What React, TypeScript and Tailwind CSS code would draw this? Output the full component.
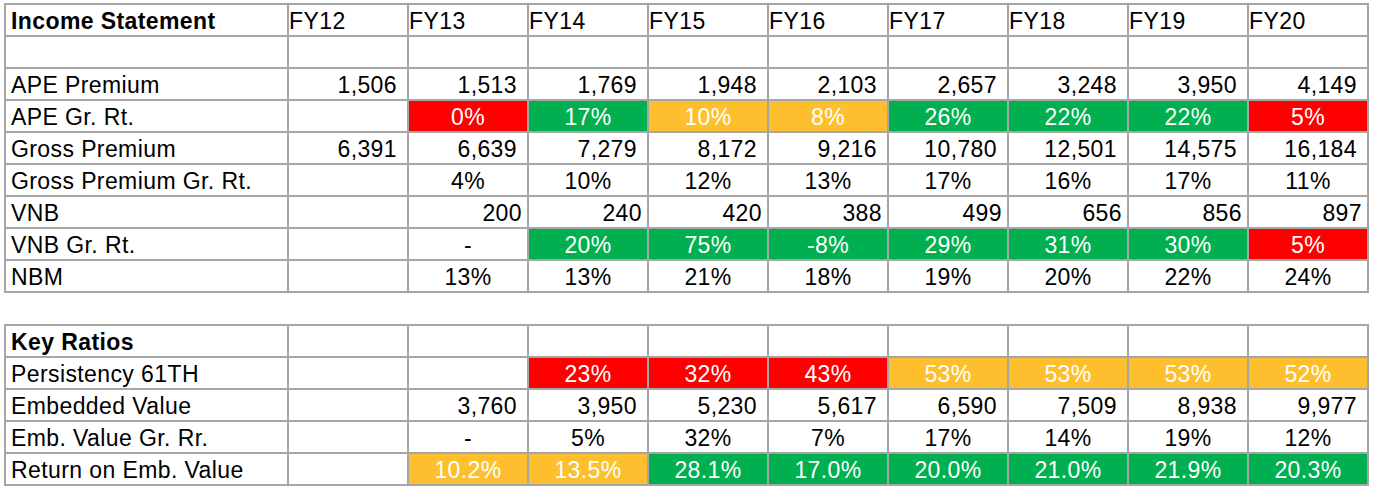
type Fill = 'r' | 'g' | 'a' | undefined;

interface Cell {
  v: string;
  align?: 'num' | 'plain' | 'mid' | 'left';
  fill?: Fill;
}

const fillClass: Record<string, string> = {
  r: 'bg-[#ff0000] text-white',
  g: 'bg-[#00b050] text-white',
  a: 'bg-[#fdbf2d] text-white',
};

const alignClass = {
  num: 'justify-end pr-[10px]',
  plain: 'justify-end pr-[5px]',
  mid: 'justify-center',
  left: 'justify-start pl-0',
};

// helpers for building rows
const nums = (...xs: string[]): Cell[] => xs.map((v) => ({ v, align: 'num' }));
const plain = (...xs: string[]): Cell[] => xs.map((v) => ({ v, align: 'plain' }));
const pct = (...xs: string[]): Cell[] => xs.map((v) => ({ v, align: 'mid' }));
const colored = (...xs: [string, Fill][]): Cell[] =>
  xs.map(([v, fill]) => ({ v, align: 'mid', fill }));
const blank = (n: number): Cell[] => Array.from({ length: n }, () => ({ v: '' }));

interface Row {
  label: string;
  bold?: boolean;
  cells: Cell[];
}

const years = ['FY12', 'FY13', 'FY14', 'FY15', 'FY16', 'FY17', 'FY18', 'FY19', 'FY20'];

const income: Row[] = [
  {
    label: 'Income Statement',
    bold: true,
    cells: years.map((v) => ({ v, align: 'left' })),
  },
  { label: '', cells: blank(9) },
  {
    label: 'APE Premium',
    cells: nums('1,506', '1,513', '1,769', '1,948', '2,103', '2,657', '3,248', '3,950', '4,149'),
  },
  {
    label: 'APE Gr. Rt.',
    cells: [
      ...blank(1),
      ...colored(
        ['0%', 'r'],
        ['17%', 'g'],
        ['10%', 'a'],
        ['8%', 'a'],
        ['26%', 'g'],
        ['22%', 'g'],
        ['22%', 'g'],
        ['5%', 'r'],
      ),
    ],
  },
  {
    label: 'Gross Premium',
    cells: nums('6,391', '6,639', '7,279', '8,172', '9,216', '10,780', '12,501', '14,575', '16,184'),
  },
  {
    label: 'Gross Premium Gr. Rt.',
    cells: [...blank(1), ...pct('4%', '10%', '12%', '13%', '17%', '16%', '17%', '11%')],
  },
  {
    label: 'VNB',
    cells: [...blank(1), ...plain('200', '240', '420', '388', '499', '656', '856', '897')],
  },
  {
    label: 'VNB Gr. Rt.',
    cells: [
      ...blank(1),
      ...pct('-'),
      ...colored(
        ['20%', 'g'],
        ['75%', 'g'],
        ['-8%', 'g'],
        ['29%', 'g'],
        ['31%', 'g'],
        ['30%', 'g'],
        ['5%', 'r'],
      ),
    ],
  },
  {
    label: 'NBM',
    cells: [...blank(1), ...pct('13%', '13%', '21%', '18%', '19%', '20%', '22%', '24%')],
  },
];

const ratios: Row[] = [
  { label: 'Key Ratios', bold: true, cells: blank(9) },
  {
    label: 'Persistency 61TH',
    cells: [
      ...blank(2),
      ...colored(
        ['23%', 'r'],
        ['32%', 'r'],
        ['43%', 'r'],
        ['53%', 'a'],
        ['53%', 'a'],
        ['53%', 'a'],
        ['52%', 'a'],
      ),
    ],
  },
  {
    label: 'Embedded Value',
    cells: [...blank(1), ...nums('3,760', '3,950', '5,230', '5,617', '6,590', '7,509', '8,938', '9,977')],
  },
  {
    label: 'Emb. Value Gr. Rr.',
    cells: [...blank(1), ...pct('-', '5%', '32%', '7%', '17%', '14%', '19%', '12%')],
  },
  {
    label: 'Return on Emb. Value',
    cells: [
      ...blank(1),
      ...colored(
        ['10.2%', 'a'],
        ['13.5%', 'a'],
        ['28.1%', 'g'],
        ['17.0%', 'g'],
        ['20.0%', 'g'],
        ['21.0%', 'g'],
        ['21.9%', 'g'],
        ['20.3%', 'g'],
      ),
    ],
  },
];

function Sheet({ rows }: { rows: Row[] }) {
  return (
    <div className="grid w-fit grid-cols-[281px_repeat(9,118px)] auto-rows-[30px] gap-[2px] bg-[#a6a6a6] p-[2px]">
      {rows.map((row, ri) => [
        <div
          key={`l${ri}`}
          className={`flex items-end bg-white pb-[1px] pl-[5px] leading-[26px] whitespace-nowrap ${
            row.bold ? 'font-bold' : ''
          }`}
        >
          {row.label}
        </div>,
        ...row.cells.map((c, ci) => (
          <div
            key={`c${ri}-${ci}`}
            className={`flex items-end pb-[1px] leading-[26px] whitespace-nowrap ${
              c.fill ? fillClass[c.fill] : 'bg-white'
            } ${alignClass[c.align ?? 'mid']}`}
          >
            {c.v}
          </div>
        )),
      ])}
    </div>
  );
}

export default function App() {
  return (
    <div className="min-h-screen bg-white pl-[4px] pt-[3px] font-['Liberation_Sans',Arial,sans-serif] text-[23px] tracking-[0.4px] text-black">
      <Sheet rows={income} />
      <div className="mt-[31px]">
        <Sheet rows={ratios} />
      </div>
    </div>
  );
}
